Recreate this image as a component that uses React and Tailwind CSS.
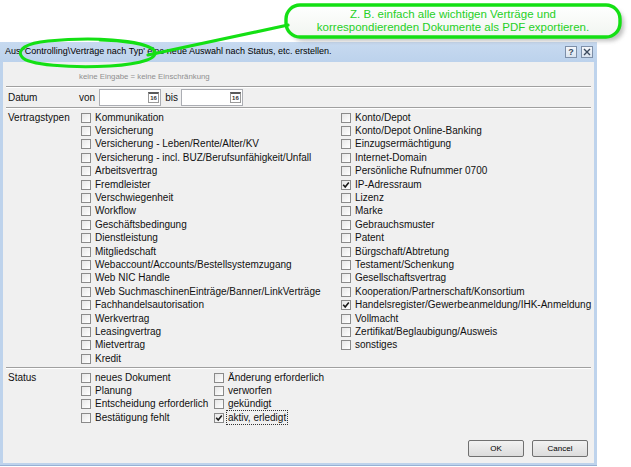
import React from "react";

const leftTypes = [
  ["Kommunikation"],
  ["Versicherung"],
  ["Versicherung - Leben/Rente/Alter/KV"],
  ["Versicherung - incl. BUZ/Berufsunfähigkeit/Unfall"],
  ["Arbeitsvertrag"],
  ["Fremdleister"],
  ["Verschwiegenheit"],
  ["Workflow"],
  ["Geschäftsbedingung"],
  ["Dienstleistung"],
  ["Mitgliedschaft"],
  ["Webaccount/Accounts/Bestellsystemzugang"],
  ["Web NIC Handle"],
  ["Web SuchmaschinenEinträge/Banner/LinkVerträge"],
  ["Fachhandelsautorisation"],
  ["Werkvertrag"],
  ["Leasingvertrag"],
  ["Mietvertrag"],
  ["Kredit"],
];

const rightTypes = [
  ["Konto/Depot"],
  ["Konto/Depot Online-Banking"],
  ["Einzugsermächtigung"],
  ["Internet-Domain"],
  ["Persönliche Rufnummer 0700"],
  ["IP-Adressraum", true],
  ["Lizenz"],
  ["Marke"],
  ["Gebrauchsmuster"],
  ["Patent"],
  ["Bürgschaft/Abtretung"],
  ["Testament/Schenkung"],
  ["Gesellschaftsvertrag"],
  ["Kooperation/Partnerschaft/Konsortium"],
  ["Handelsregister/Gewerbeanmeldung/IHK-Anmeldung", true],
  ["Vollmacht"],
  ["Zertifikat/Beglaubigung/Ausweis"],
  ["sonstiges"],
];

const statusLeft = [
  ["neues Dokument"],
  ["Planung"],
  ["Entscheidung erforderlich"],
  ["Bestätigung fehlt"],
];

const statusRight = [
  ["Änderung erforderlich"],
  ["verworfen"],
  ["gekündigt"],
  ["aktiv, erledigt", true, true],
];

function Box({ checked }) {
  return (
    <span className="w-[10px] h-[10px] shrink-0 border border-[#8a8a8a] bg-linear-to-br from-[#e6e6e6] to-white flex items-center justify-center">
      {checked && (
        <svg width="8" height="8" viewBox="0 0 8 8">
          <path d="M1.2 3.8 L3.2 6 L6.8 1.6" stroke="#1a1a1a" strokeWidth="1.6" fill="none" />
        </svg>
      )}
    </span>
  );
}

function Check({ label, checked, focus }) {
  return (
    <div className="h-[13.4px] flex items-center gap-[4px]">
      <Box checked={checked} />
      <span
        className={
          focus
            ? "border border-dotted border-[#333] px-[1px] -ml-[2px] leading-[13px] whitespace-nowrap"
            : "leading-[12px] whitespace-nowrap"
        }
      >
        {label}
      </span>
    </div>
  );
}

function DateInput() {
  return (
    <div className="w-[62px] h-[17px] bg-white border border-[#abadb3] flex items-center justify-end pr-[1px]">
      <span className="w-[11px] h-[11px] border border-[#9a9a9a] border-t-[2px] border-t-[#5a5a5a] bg-white text-[6px] leading-[8px] text-center font-bold text-[#333]">
        16
      </span>
    </div>
  );
}

function Separator() {
  return <div className="mx-[3px] h-[2px] border-t border-t-[#a0a0a0] border-b border-b-white" />;
}

function Callout() {
  return (
    <>
      <svg className="absolute left-0 top-0" width="631" height="80" viewBox="0 0 631 80">
        <defs>
          <filter id="blur" x="-10%" y="-30%" width="120%" height="160%">
            <feGaussianBlur stdDeviation="2" />
          </filter>
          <linearGradient id="fill" x1="0" y1="0" x2="0" y2="1">
            <stop offset="0" stopColor="#ffffff" />
            <stop offset="1" stopColor="#f1f5f0" />
          </linearGradient>
        </defs>
        <rect x="290" y="9" width="334" height="32" rx="14" fill="#8a8a8a" opacity="0.55" filter="url(#blur)" />
        <rect x="286" y="5" width="334" height="32" rx="14" fill="url(#fill)" stroke="#14e014" strokeWidth="3.4" />
        <path d="M148 55 L288 25" stroke="#14e014" strokeWidth="3.2" strokeLinecap="round" fill="none" />
        <path
          d="M154 50 C142 39 90 37 48 41 C26 43 16 50 22 57 C28 65 70 68 110 66 C142 64 160 58 154 50 C148 44 122 40 100 40"
          stroke="#14e014"
          strokeWidth="3"
          strokeLinecap="round"
          fill="none"
        />
      </svg>
      <div className="absolute left-[286px] top-[8px] w-[334px] text-center text-[11.5px] leading-[13px] text-[#26d026]">
        <div>Z. B. einfach alle wichtigen Verträge und</div>
        <div>korrespondierenden Dokumente als PDF exportieren.</div>
      </div>
    </>
  );
}

export default function App() {
  return (
    <div className="relative w-[631px] h-[467px] overflow-hidden bg-white font-['Liberation_Sans',Arial,sans-serif] text-[10px] text-[#111]">
      <div className="mt-[42px] w-[597px] h-[424px] flex flex-col bg-[#bed3ec] border-b border-[#97b1d4]">
        {/* title bar */}
        <div className="h-[20px] flex items-center bg-linear-to-b from-[#c7daf0] to-[#bcd2ec]">
          <span className="pl-[5px] text-[9px] text-black whitespace-nowrap">
            Aus 'Controlling\Verträge nach Typ' eine neue Auswahl nach Status, etc. erstellen.
          </span>
          <div className="ml-auto flex gap-[4px] pr-[4px]">
            <span className="w-[12px] h-[12px] border border-[#7d8fa8] bg-linear-to-b from-[#f4f7fb] to-[#d9e3ef] flex items-center justify-center text-[9px] font-bold text-[#3b4a5e] leading-none">
              ?
            </span>
            <span className="w-[12px] h-[12px] border border-[#7d8fa8] bg-linear-to-b from-[#f4f7fb] to-[#d9e3ef] flex items-center justify-center">
              <svg width="8" height="8" viewBox="0 0 8 8">
                <path d="M1 1 L7 7 M7 1 L1 7" stroke="#3b4a5e" strokeWidth="1.4" />
              </svg>
            </span>
          </div>
        </div>

        {/* client */}
        <div className="flex-1 mx-[3px] mb-[2px] bg-[#f0f0f0] flex flex-col">
          <div className="h-[24px] pt-[9px] pl-[76px] text-[7.8px] leading-[12px] text-[#8f8f8f]">
            keine Eingabe = keine Einschränkung
          </div>
          <Separator />

          <div className="h-[19px] flex items-center">
            <span className="w-[76px] pl-[5px]">Datum</span>
            <span className="mr-[4px]">von</span>
            <DateInput />
            <span className="ml-[4px] mr-[3px]">bis</span>
            <DateInput />
          </div>
          <Separator />

          <div className="flex pt-[2px] pb-[2px]">
            <span className="w-[78px] pl-[5px] leading-[13.4px]">Vertragstypen</span>
            <div className="w-[260px] flex flex-col">
              {leftTypes.map(([l, c]) => (
                <Check key={l} label={l} checked={c} />
              ))}
            </div>
            <div className="flex flex-col">
              {rightTypes.map(([l, c]) => (
                <Check key={l} label={l} checked={c} />
              ))}
            </div>
          </div>
          <Separator />

          <div className="flex pt-[1.5px]">
            <span className="w-[78px] pl-[5px] leading-[13.4px]">Status</span>
            <div className="w-[133px] flex flex-col">
              {statusLeft.map(([l, c]) => (
                <Check key={l} label={l} checked={c} />
              ))}
            </div>
            <div className="flex flex-col">
              {statusRight.map(([l, c, f]) => (
                <Check key={l} label={l} checked={c} focus={f} />
              ))}
            </div>
          </div>

          <div className="mt-auto flex justify-end gap-[8px] pr-[6px] pb-[6px]">
            <button className="w-[56px] h-[17px] border border-[#707070] rounded-[2px] bg-linear-to-b from-[#f2f2f2] to-[#dcdcdc] text-[8px] text-black">
              OK
            </button>
            <button className="w-[56px] h-[17px] border border-[#707070] rounded-[2px] bg-linear-to-b from-[#f2f2f2] to-[#dcdcdc] text-[8px] text-black">
              Cancel
            </button>
          </div>
        </div>
      </div>
      <Callout />
    </div>
  );
}
